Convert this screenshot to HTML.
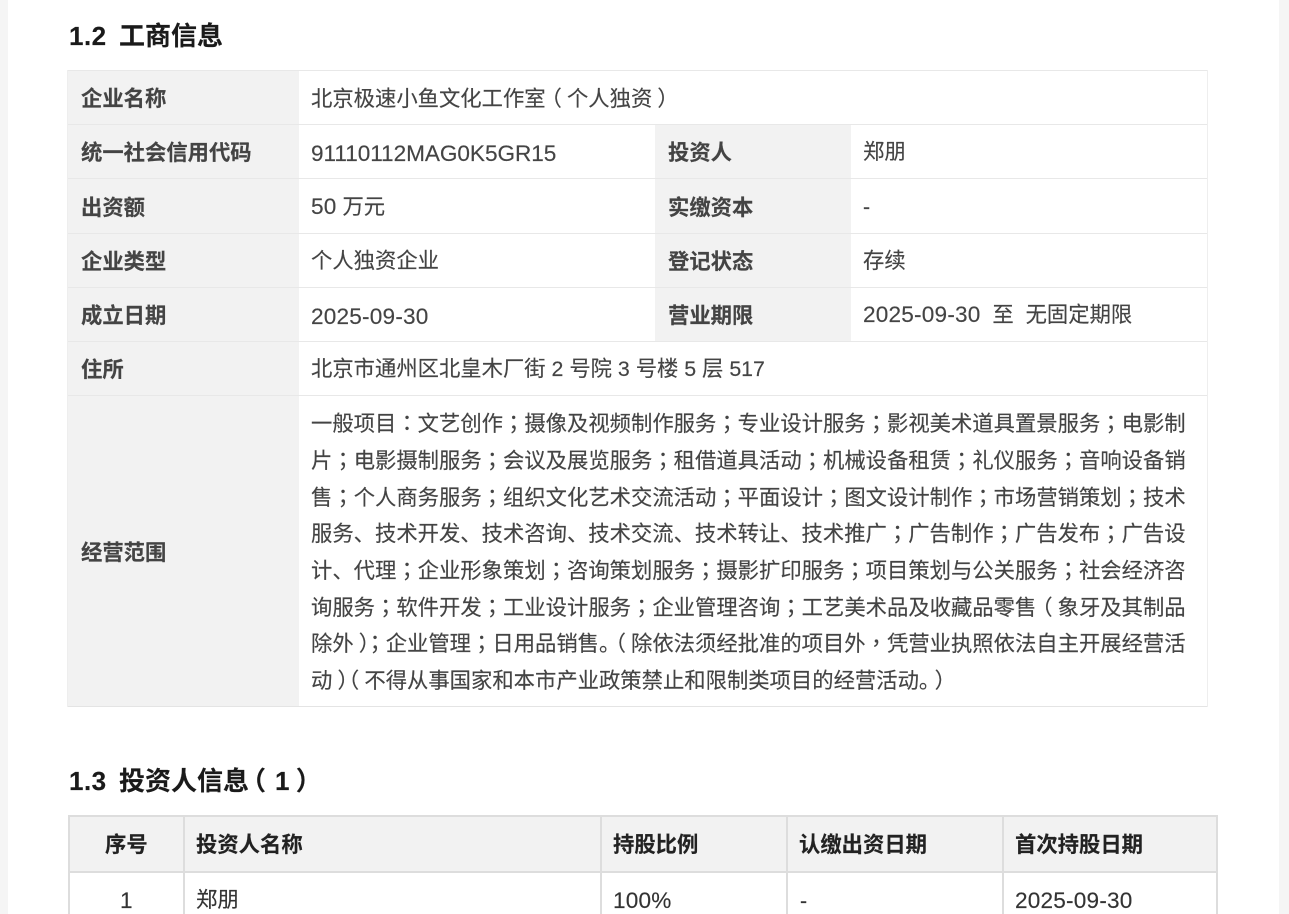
<!DOCTYPE html>
<html>
<head>
<meta charset="utf-8">
<title>工商信息</title>
<style>
html,body{margin:0;padding:0;background:#f5f5f5;}
#p{position:relative;width:1289px;height:914px;overflow:hidden;background:#f5f5f5;font-family:"Liberation Sans","Noto Sans CJK SC",sans-serif;color:#444;font-size:21.33px;-webkit-text-stroke:.15px currentColor;}
#w{position:absolute;left:8px;top:0;width:1271px;height:914px;background:#fff;}
.b{position:absolute;}
.t{position:absolute;white-space:nowrap;line-height:30px;height:30px;}
.l{font-weight:bold;color:#444;}
.h{font-weight:bold;color:#222;}
.d{color:#333;}
.tt{position:absolute;white-space:nowrap;font-weight:bold;color:#1a1a1a;font-size:26px;line-height:36px;}
.tt b{display:inline-block;width:50px;letter-spacing:.5px;}
i{font-style:normal;font-family:"Noto Sans CJK TC",sans-serif;}
.o{position:relative;left:-.24em;}
.c{position:relative;left:.24em;}
.n{font-size:22.6px;letter-spacing:.2px;}
</style>
</head>
<body>
<div id="p">
<div id="w"></div>

<div class="tt" style="left:69px;top:18px"><b>1.2</b>工商信息</div>

<!-- table 1 backgrounds -->
<div class="b" style="left:68px;top:70px;width:231px;height:637px;background:#f2f2f2"></div>
<div class="b" style="left:655px;top:124px;width:196px;height:218px;background:#f2f2f2"></div>
<!-- table 1 lines -->
<div class="b" style="left:68px;top:70px;width:1140px;height:1px;background:#e8e8e8"></div>
<div class="b" style="left:68px;top:124px;width:1140px;height:1px;background:#e8e8e8"></div>
<div class="b" style="left:68px;top:178px;width:1140px;height:1px;background:#e8e8e8"></div>
<div class="b" style="left:68px;top:233px;width:1140px;height:1px;background:#e8e8e8"></div>
<div class="b" style="left:68px;top:287px;width:1140px;height:1px;background:#e8e8e8"></div>
<div class="b" style="left:68px;top:341px;width:1140px;height:1px;background:#e8e8e8"></div>
<div class="b" style="left:68px;top:395px;width:1140px;height:1px;background:#e8e8e8"></div>
<div class="b" style="left:68px;top:706px;width:1140px;height:1px;background:#e4e4e4"></div>
<div class="b" style="left:1207px;top:70px;width:1px;height:637px;background:#eee"></div>
<div class="b" style="left:67px;top:70px;width:1px;height:637px;background:#eee"></div>

<!-- table 1 labels -->
<div class="t l" style="left:81px;top:84px">企业名称</div>
<div class="t l" style="left:81px;top:138px">统一社会信用代码</div>
<div class="t l" style="left:81px;top:193px">出资额</div>
<div class="t l" style="left:81px;top:247px">企业类型</div>
<div class="t l" style="left:81px;top:301px">成立日期</div>
<div class="t l" style="left:81px;top:355px">住所</div>
<div class="t l" style="left:81px;top:538px">经营范围</div>
<div class="t l" style="left:668px;top:138px">投资人</div>
<div class="t l" style="left:668px;top:193px">实缴资本</div>
<div class="t l" style="left:668px;top:247px">登记状态</div>
<div class="t l" style="left:668px;top:301px">营业期限</div>

<!-- table 1 values -->
<div class="t" style="left:311px;top:83px">北京极速小鱼文化工作室<i class="o">（</i>个人独资<i class="c">）</i></div>
<div class="t n" style="left:311px;top:139px;letter-spacing:-.05px">91110112MAG0K5GR15</div>
<div class="t" style="left:311px;top:192px"><span class="n">50</span> 万元</div>
<div class="t" style="left:311px;top:246px">个人独资企业</div>
<div class="t n" style="left:311px;top:302px">2025-09-30</div>
<div class="t" style="left:311px;top:354px">北京市通州区北皇木厂街 2 号院 3 号楼 5 层 517</div>
<div class="t" style="left:863px;top:137px">郑朋</div>
<div class="t" style="left:863px;top:192px">-</div>
<div class="t" style="left:863px;top:246px">存续</div>
<div class="t" style="left:863px;top:300px"><span class="n">2025-09-30</span>&nbsp; 至&nbsp; 无固定期限</div>

<div class="t" style="left:311px;top:408px">一般项目<i>：</i>文艺创作<i>；</i>摄像及视频制作服务<i>；</i>专业设计服务<i>；</i>影视美术道具置景服务<i>；</i>电影制</div>
<div class="t" style="left:311px;top:445px">片<i>；</i>电影摄制服务<i>；</i>会议及展览服务<i>；</i>租借道具活动<i>；</i>机械设备租赁<i>；</i>礼仪服务<i>；</i>音响设备销</div>
<div class="t" style="left:311px;top:482px">售<i>；</i>个人商务服务<i>；</i>组织文化艺术交流活动<i>；</i>平面设计<i>；</i>图文设计制作<i>；</i>市场营销策划<i>；</i>技术</div>
<div class="t" style="left:311px;top:518px">服务、技术开发、技术咨询、技术交流、技术转让、技术推广<i>；</i>广告制作<i>；</i>广告发布<i>；</i>广告设</div>
<div class="t" style="left:311px;top:555px">计、代理<i>；</i>企业形象策划<i>；</i>咨询策划服务<i>；</i>摄影扩印服务<i>；</i>项目策划与公关服务<i>；</i>社会经济咨</div>
<div class="t" style="left:311px;top:592px">询服务<i>；</i>软件开发<i>；</i>工业设计服务<i>；</i>企业管理咨询<i>；</i>工艺美术品及收藏品零售<i class="o">（</i>象牙及其制品</div>
<div class="t" style="left:311px;top:628px">除外<i class="c">）</i><i>；</i>企业管理<i>；</i>日用品销售。<i class="o">（</i>除依法须经批准的项目外<i>，</i>凭营业执照依法自主开展经营活</div>
<div class="t" style="left:311px;top:665px">动<i class="c">）</i><i class="o">（</i>不得从事国家和本市产业政策禁止和限制类项目的经营活动。<i class="c">）</i></div>

<div class="tt" style="left:69px;top:762px"><b>1.3</b>投资人信息<i class="o" style="left:-9px">（</i>1<i class="c">）</i></div>

<!-- table 2 -->
<div class="b" style="left:69px;top:816px;width:1149px;height:56px;background:#f2f2f2"></div>
<div class="b" style="left:68px;top:815px;width:1150px;height:2px;background:#ddd"></div>
<div class="b" style="left:68px;top:871px;width:1150px;height:2px;background:#ddd"></div>
<div class="b" style="left:68px;top:815px;width:2px;height:99px;background:#ddd"></div>
<div class="b" style="left:183px;top:815px;width:2px;height:99px;background:#ddd"></div>
<div class="b" style="left:600px;top:815px;width:2px;height:99px;background:#ddd"></div>
<div class="b" style="left:786px;top:815px;width:2px;height:99px;background:#ddd"></div>
<div class="b" style="left:1002px;top:815px;width:2px;height:99px;background:#ddd"></div>
<div class="b" style="left:1216px;top:815px;width:2px;height:99px;background:#ddd"></div>

<div class="t h" style="left:105px;top:830px">序号</div>
<div class="t h" style="left:196px;top:830px">投资人名称</div>
<div class="t h" style="left:613px;top:830px">持股比例</div>
<div class="t h" style="left:799px;top:830px">认缴出资日期</div>
<div class="t h" style="left:1015px;top:830px">首次持股日期</div>

<div class="t d n" style="left:120px;top:886px">1</div>
<div class="t d" style="left:196px;top:885px">郑朋</div>
<div class="t d n" style="left:613px;top:886px">100%</div>
<div class="t d" style="left:800px;top:886px">-</div>
<div class="t d n" style="left:1015px;top:886px">2025-09-30</div>
</div>
</body>
</html>
